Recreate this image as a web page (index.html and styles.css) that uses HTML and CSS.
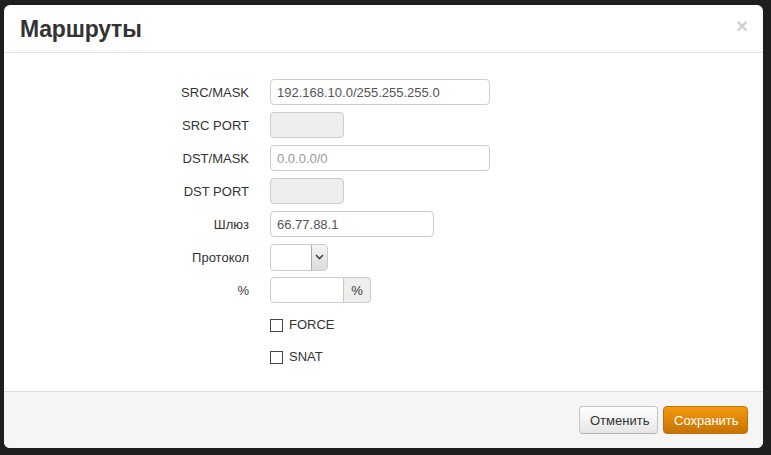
FILE: index.html
```html
<!DOCTYPE html>
<html lang="ru">
<head>
<meta charset="utf-8">
<title>Маршруты</title>
<link rel="stylesheet" href="styles.css">
</head>
<body>
<div class="modal">
  <div class="modal-header">
    <h3 class="title">Маршруты</h3>
    <span class="close">×</span>
  </div>
  <div class="modal-body">
    <div class="form">
      <label class="lbl">SRC/MASK</label>
      <div class="ctl"><input class="inp w-long" type="text" value="192.168.10.0/255.255.255.0"></div>

      <label class="lbl">SRC PORT</label>
      <div class="ctl"><input class="inp w-short" type="text" disabled></div>

      <label class="lbl">DST/MASK</label>
      <div class="ctl"><input class="inp w-long" type="text" placeholder="0.0.0.0/0"></div>

      <label class="lbl">DST PORT</label>
      <div class="ctl"><input class="inp w-short" type="text" disabled></div>

      <label class="lbl">Шлюз</label>
      <div class="ctl"><input class="inp w-mid" type="text" value="66.77.88.1"></div>

      <label class="lbl">Протокол</label>
      <div class="ctl">
        <div class="select">
          <span class="select-val"></span>
          <span class="select-btn">
            <svg width="9" height="6" viewBox="0 0 9 6"><path d="M1 1 L4.5 4.5 L8 1" fill="none" stroke="#444" stroke-width="1.6"/></svg>
          </span>
        </div>
      </div>

      <label class="lbl">%</label>
      <div class="ctl">
        <div class="append">
          <input class="inp inp-append" type="text">
          <span class="addon">%</span>
        </div>
      </div>

      <span class="lbl"></span>
      <div class="ctl chk-row chk-first"><span class="chk"></span><span class="chk-text">FORCE</span></div>

      <span class="lbl"></span>
      <div class="ctl chk-row"><span class="chk"></span><span class="chk-text">SNAT</span></div>
    </div>
  </div>
  <div class="modal-footer">
    <button class="btn btn-default">Отменить</button>
    <button class="btn btn-warning">Сохранить</button>
  </div>
</div>
</body>
</html>
```

FILE: styles.css
```css
html, body {
  margin: 0;
  padding: 0;
  background: #1e1e1e;
  width: 771px;
  height: 455px;
  overflow: hidden;
  font-family: "Liberation Sans", Arial, sans-serif;
  font-size: 13px;
  color: #333;
}

.modal {
  margin: 5px 0 0 4px;
  width: 759px;
  height: 443px;
  background: #fff;
  border-radius: 6px;
  display: flex;
  flex-direction: column;
  overflow: hidden;
}

.modal-header {
  height: 48px;
  box-sizing: border-box;
  border-bottom: 1px solid #e5e5e5;
  display: flex;
  align-items: center;
  justify-content: space-between;
  padding: 0 15px 0 16px;
}

.title {
  margin: 0;
  font-size: 23px;
  font-weight: bold;
  color: #333;
  letter-spacing: -0.2px;
  line-height: 1;
  padding-top: 2px;
}

.close {
  font-size: 20px;
  font-weight: bold;
  color: #d0d0d0;
  line-height: 1;
  margin-top: -6px;
}

.modal-body {
  flex: 1;
  padding-top: 26px;
}

.form {
  display: grid;
  grid-template-columns: 245px 1fr;
  column-gap: 21px;
  row-gap: 7px;
  align-items: center;
}

.lbl {
  text-align: right;
  font-size: 13px;
  color: #333;
}

.ctl {
  display: flex;
  align-items: center;
  height: 26px;
}

.inp {
  box-sizing: border-box;
  height: 26px;
  border: 1px solid #ccc;
  border-radius: 4px;
  padding: 3px 6px;
  font-family: "Liberation Sans", Arial, sans-serif;
  font-size: 13px;
  color: #555;
  background: #fff;
  outline: none;
  margin: 0;
}

.inp::placeholder {
  color: #999;
}

.inp:disabled {
  background: #eee;
}

.w-long { width: 220px; }
.w-short { width: 74px; }
.w-mid { width: 164px; }

.select {
  box-sizing: border-box;
  width: 58px;
  height: 27px;
  border: 1px solid #ccc;
  border-radius: 4px;
  display: flex;
  overflow: hidden;
  background: #fff;
}

.select-val {
  flex: 1;
}

.select-btn {
  width: 15px;
  border-left: 1px solid #aaa;
  background: linear-gradient(#f4f4f4, #dcdcdc);
  display: flex;
  align-items: center;
  justify-content: center;
}

.append {
  display: flex;
}

.inp-append {
  width: 74px;
  border-radius: 4px 0 0 4px;
}

.addon {
  box-sizing: border-box;
  width: 27px;
  height: 26px;
  border: 1px solid #ccc;
  border-left: none;
  border-radius: 0 4px 4px 0;
  background: #eee;
  display: flex;
  align-items: center;
  justify-content: center;
  font-size: 13px;
  color: #333;
}

.chk-row {
  height: 25px;
}

.chk-first {
  margin-top: 2px;
}

.chk {
  box-sizing: border-box;
  width: 13px;
  height: 13px;
  border: 1px solid #444;
  background: #fff;
  margin-top: 2px;
}

.chk-text {
  margin-left: 6px;
  font-size: 13px;
  color: #333;
}

.modal-footer {
  height: 57px;
  box-sizing: border-box;
  border-top: 1px solid #ddd;
  background: #f5f5f5;
  display: flex;
  align-items: flex-start;
  justify-content: flex-end;
  padding: 14px 15px 0 0;
  gap: 5px;
}

.btn {
  box-sizing: border-box;
  height: 28px;
  border-radius: 4px;
  font-family: "Liberation Sans", Arial, sans-serif;
  font-size: 13px;
  padding: 0 10px;
  margin: 0;
  cursor: pointer;
}

.btn-default {
  width: 79px;
  color: #333;
  background: linear-gradient(#ffffff, #e6e6e6);
  border: 1px solid #c5c5c5;
  border-bottom-color: #b3b3b3;
}

.btn-warning {
  width: 85px;
  color: #fff;
  background: linear-gradient(#f49a0e, #c67305);
  border: 1px solid #c27005;
}
```
